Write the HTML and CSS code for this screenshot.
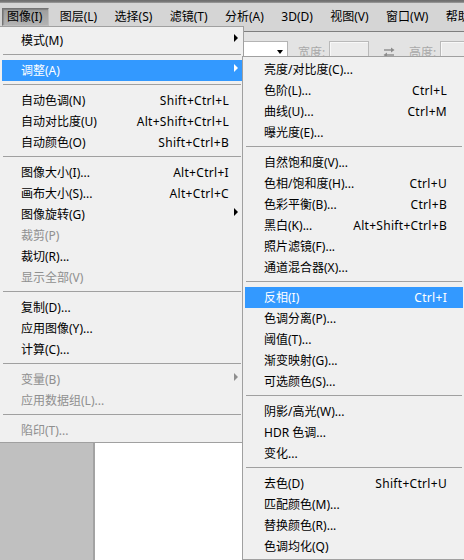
FILE: index.html
```html
<!DOCTYPE html>
<html lang="zh-CN">
<head>
<meta charset="utf-8">
<title>图像菜单</title>
<link rel="stylesheet" href="styles.css">
</head>
<body>
<div class="app">
  <div class="topstrip"></div>
  <div class="menubar">
    <span class="mb-item active">图像(I)</span>
    <span class="mb-item">图层(L)</span>
    <span class="mb-item">选择(S)</span>
    <span class="mb-item">滤镜(T)</span>
    <span class="mb-item">分析(A)</span>
    <span class="mb-item">3D(D)</span>
    <span class="mb-item">视图(V)</span>
    <span class="mb-item">窗口(W)</span>
    <span class="mb-item">帮助(H)</span>
  </div>
  <div class="toolbar">
    <div class="tb-spacer"></div>
    <div class="tb-select"><span class="caret"></span></div>
    <span class="tb-label first">宽度:</span>
    <div class="tb-input"></div>
    <svg class="swap" width="12" height="10" viewBox="0 0 12 10">
      <path d="M1 3H10" stroke="#8c8c8c" stroke-width="1.4" fill="none"/>
      <path d="M8 0.5L11.5 3L8 5.5Z" fill="#8c8c8c"/>
      <path d="M2 8H11" stroke="#8c8c8c" stroke-width="1.4" fill="none"/>
      <path d="M4 5.5L0.5 8L4 10.5Z" fill="#8c8c8c"/>
    </svg>
    <span class="tb-label">高度:</span>
    <div class="tb-input"></div>
  </div>
  <div class="workspace">
    <div class="pasteboard"></div>
    <div class="canvas"></div>
  </div>

  <div class="menu main-menu">
    <div class="item"><span class="label">模式(M)</span><span class="arrow"></span></div>
    <div class="sep"></div>
    <div class="item hl"><span class="label">调整(A)</span><span class="arrow"></span></div>
    <div class="sep"></div>
    <div class="item"><span class="label">自动色调(N)</span><span class="key">Shift+Ctrl+L</span></div>
    <div class="item"><span class="label">自动对比度(U)</span><span class="key">Alt+Shift+Ctrl+L</span></div>
    <div class="item"><span class="label">自动颜色(O)</span><span class="key">Shift+Ctrl+B</span></div>
    <div class="sep"></div>
    <div class="item"><span class="label">图像大小(I)...</span><span class="key">Alt+Ctrl+I</span></div>
    <div class="item"><span class="label">画布大小(S)...</span><span class="key">Alt+Ctrl+C</span></div>
    <div class="item"><span class="label">图像旋转(G)</span><span class="arrow"></span></div>
    <div class="item off"><span class="label">裁剪(P)</span></div>
    <div class="item"><span class="label">裁切(R)...</span></div>
    <div class="item off"><span class="label">显示全部(V)</span></div>
    <div class="sep"></div>
    <div class="item"><span class="label">复制(D)...</span></div>
    <div class="item"><span class="label">应用图像(Y)...</span></div>
    <div class="item"><span class="label">计算(C)...</span></div>
    <div class="sep"></div>
    <div class="item off"><span class="label">变量(B)</span><span class="arrow"></span></div>
    <div class="item off"><span class="label">应用数据组(L)...</span></div>
    <div class="sep"></div>
    <div class="item off"><span class="label">陷印(T)...</span></div>
  </div>

  <div class="menu sub-menu">
    <div class="item"><span class="label">亮度/对比度(C)...</span></div>
    <div class="item"><span class="label">色阶(L)...</span><span class="key">Ctrl+L</span></div>
    <div class="item"><span class="label">曲线(U)...</span><span class="key">Ctrl+M</span></div>
    <div class="item"><span class="label">曝光度(E)...</span></div>
    <div class="sep"></div>
    <div class="item"><span class="label">自然饱和度(V)...</span></div>
    <div class="item"><span class="label">色相/饱和度(H)...</span><span class="key">Ctrl+U</span></div>
    <div class="item"><span class="label">色彩平衡(B)...</span><span class="key">Ctrl+B</span></div>
    <div class="item"><span class="label">黑白(K)...</span><span class="key">Alt+Shift+Ctrl+B</span></div>
    <div class="item"><span class="label">照片滤镜(F)...</span></div>
    <div class="item"><span class="label">通道混合器(X)...</span></div>
    <div class="sep"></div>
    <div class="item hl"><span class="label">反相(I)</span><span class="key">Ctrl+I</span></div>
    <div class="item"><span class="label">色调分离(P)...</span></div>
    <div class="item"><span class="label">阈值(T)...</span></div>
    <div class="item"><span class="label">渐变映射(G)...</span></div>
    <div class="item"><span class="label">可选颜色(S)...</span></div>
    <div class="sep"></div>
    <div class="item"><span class="label">阴影/高光(W)...</span></div>
    <div class="item"><span class="label">HDR 色调...</span></div>
    <div class="item"><span class="label">变化...</span></div>
    <div class="sep"></div>
    <div class="item"><span class="label">去色(D)</span><span class="key">Shift+Ctrl+U</span></div>
    <div class="item"><span class="label">匹配颜色(M)...</span></div>
    <div class="item"><span class="label">替换颜色(R)...</span></div>
    <div class="item"><span class="label">色调均化(Q)</span></div>
  </div>
</div>
</body>
</html>
```

FILE: styles.css
```css
* { box-sizing: border-box; }

html, body {
  margin: 0;
  padding: 0;
}

body {
  width: 464px;
  height: 560px;
  overflow: hidden;
  font-family: "Noto Sans", "Noto Sans CJK SC", sans-serif;
  font-size: 12px;
  color: #000;
  background: #c0c0c0;
}

.app {
  position: relative;
  width: 464px;
  height: 560px;
  display: flex;
  flex-direction: column;
  overflow: hidden;
}

.topstrip {
  height: 3px;
  flex: none;
  background: linear-gradient(#6c6c6c, #7c7c7c 66%, #a8a8a8);
}

.menubar {
  height: 29px;
  flex: none;
  display: flex;
  align-items: center;
  gap: 5.4px;
  padding-left: 2px;
  background: #d5d5d5;
  border-bottom: 1px solid #7e7e7e;
  white-space: nowrap;
  overflow: hidden;
}

.mb-item {
  flex: none;
  height: 18px;
  line-height: 16px;
  padding: 0 6px 0 4px;
  border: 1px solid transparent;
  color: #000;
}

.mb-item.active {
  background: linear-gradient(#9d9d9d, #b3b3b3);
  border-color: #747474 #bdbdbd #bdbdbd #747474;
  box-shadow: inset 1px 1px 1px rgba(0, 0, 0, 0.18);
}

.toolbar {
  height: 39px;
  flex: none;
  display: flex;
  align-items: center;
  background: #e3e3e3;
  white-space: nowrap;
}

.tb-spacer {
  width: 200px;
  flex: none;
}

.tb-select {
  position: relative;
  width: 88px;
  height: 21px;
  flex: none;
  background: #fff;
  border: 1px solid #b4b4b4;
}

.caret {
  position: absolute;
  right: 4px;
  top: 8px;
  width: 0;
  height: 0;
  border-left: 3.5px solid transparent;
  border-right: 3.5px solid transparent;
  border-top: 4px solid #000;
}

.tb-label {
  flex: none;
  color: #a9a9a9;
  margin-left: 14px;
  width: 31px;
}

.tb-label.first {
  margin-left: 10px;
}

.tb-input {
  flex: none;
  width: 40px;
  height: 21px;
  background: #ebebeb;
  border: 1px solid #b9b9b9;
  box-shadow: inset 1px 1px 0 #f8f8f8;
}

.swap {
  flex: none;
  margin-left: 14px;
}

.workspace {
  flex: 1;
  display: flex;
}

.pasteboard {
  width: 93px;
  flex: none;
  background: #c0c0c0;
}

.canvas {
  flex: 1;
  background: #fff;
  border-left: 2px solid #a3a3a3;
}

/* Menus (overlay) */
.menu {
  position: absolute;
  background: #f0f0f0;
  border: 1px solid #a0a0a0;
  white-space: nowrap;
}

.main-menu {
  left: -1px;
  top: 26px;
  width: 245px;
  padding: 3px 0 1px;
}

.sub-menu {
  left: 242px;
  top: 56px;
  width: 224px;
  padding: 2px 0 2px;
}

.item {
  position: relative;
  display: flex;
  justify-content: space-between;
  align-items: center;
  height: 21px;
  line-height: 21px;
  color: #000;
}

.key {
  letter-spacing: 0.3px;
}

.main-menu .item {
  margin: 0 1px 0 2px;
  padding: 0 13px 0 19px;
}

.sub-menu .item {
  margin: 0 2px;
  padding: 0 16px 0 19px;
}

.item.hl {
  background: #3399ff;
  color: #fff;
}

.item.off {
  color: #8f8f8f;
}

.arrow {
  position: absolute;
  right: 4px;
  top: 4px;
  width: 0;
  height: 0;
  border-top: 4px solid transparent;
  border-bottom: 4px solid transparent;
  border-left: 4px solid #000;
}

.item.hl .arrow {
  border-left-color: #fff;
}

.item.off .arrow {
  border-left-color: #8f8f8f;
}

.sep {
  height: 1px;
  background: #a0a0a0;
  margin: 3px 2px 5px 3px;
}

.sub-menu .sep {
  margin: 3px 3px 5px 3px;
}
```
